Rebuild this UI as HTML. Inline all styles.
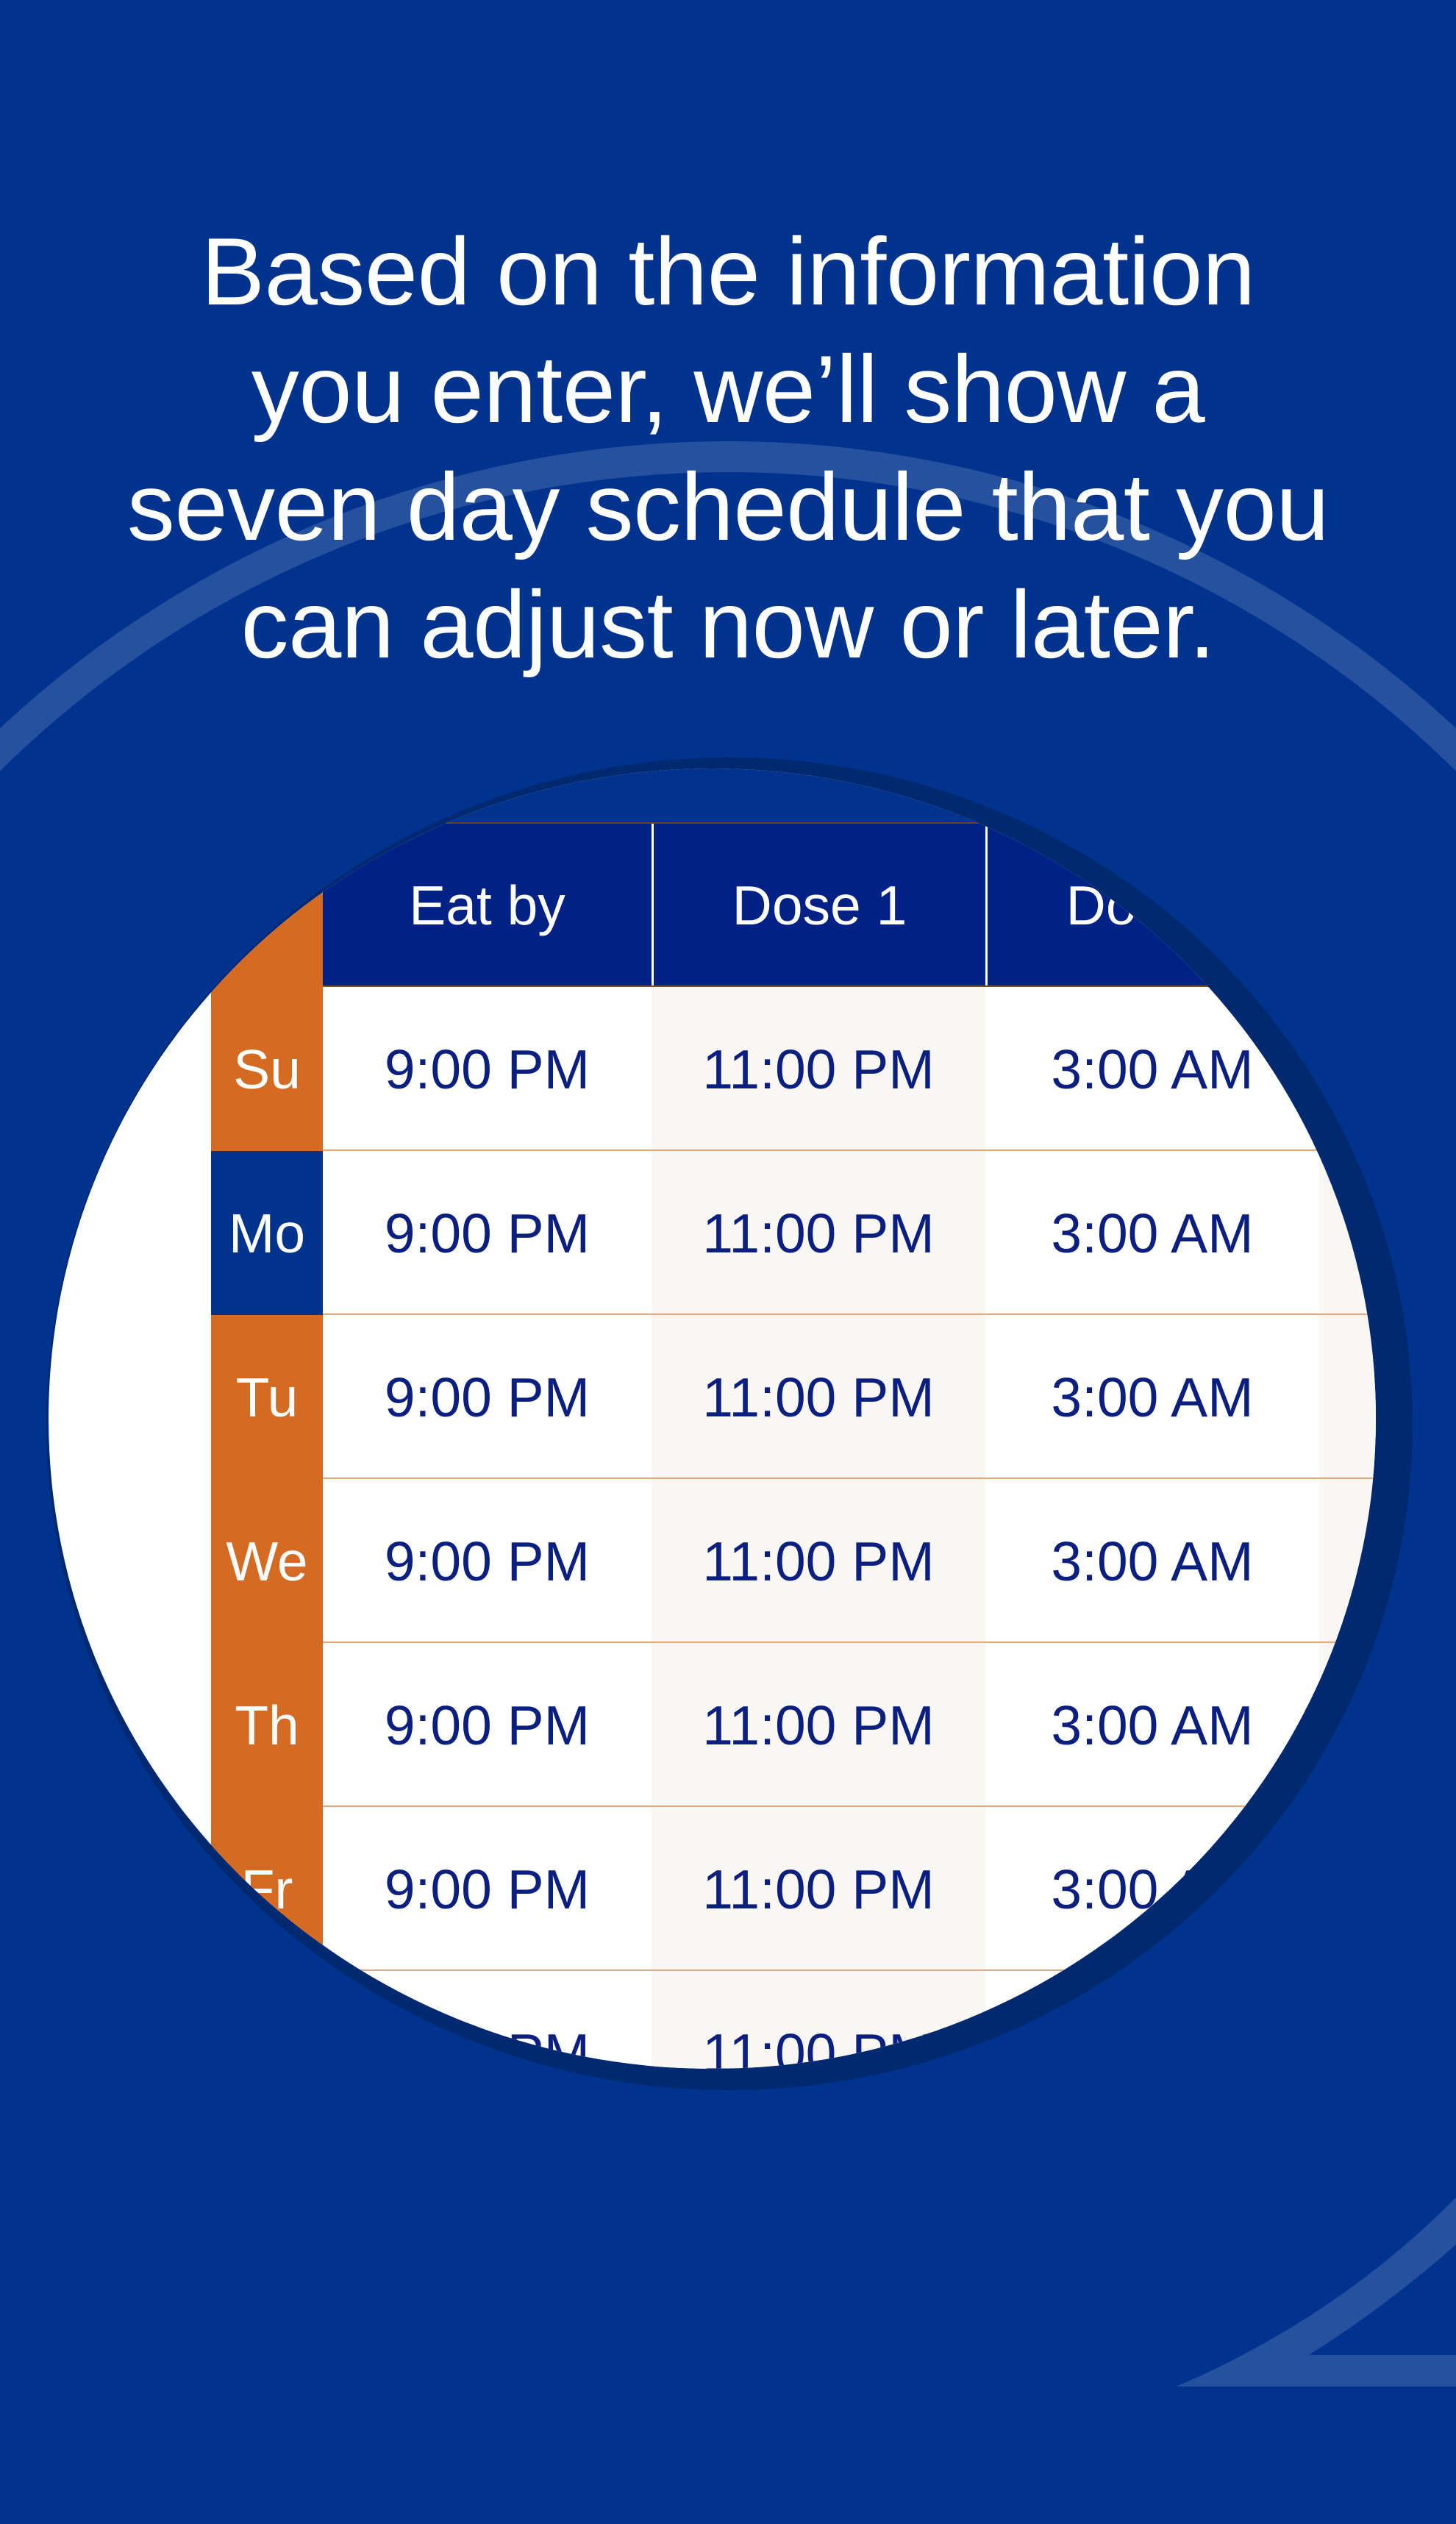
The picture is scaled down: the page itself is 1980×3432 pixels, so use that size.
<!DOCTYPE html>
<html><head><meta charset="utf-8">
<style>
html,body{margin:0;padding:0}
body{width:1980px;height:3432px;background:#00338d;position:relative;overflow:hidden;font-family:"Liberation Sans",sans-serif}
.head{position:absolute;left:0;top:289px;width:1980px;text-align:center;color:#fff;font-size:130px;line-height:160px;letter-spacing:-0.5px}
.shadow{position:absolute;left:63px;top:1030px;width:1858px;height:1812px;border-radius:50%;background:#00296f}
.clip{position:absolute;left:66px;top:1045px;width:1805px;height:1768px;border-radius:50%;overflow:hidden;background:#fff}
.a{position:absolute}
.cell{position:absolute;display:flex;align-items:center;justify-content:center;font-size:75px;color:#0a1f7f}
.hd{color:#fff;background:#002185}
.day{color:#fff;font-size:75px}
.ln{position:absolute;left:373px;width:1500px;height:2px;background:#e3a877}
</style></head><body>
<svg class="a" style="left:0;top:0" width="1980" height="3432">
<defs><clipPath id="c"><rect x="0" y="0" width="1980" height="1300"/></clipPath></defs>
<circle cx="990" cy="2051" r="1430" fill="none" stroke="#ffffff" stroke-opacity="0.15" stroke-width="42" clip-path="url(#c)"/>
<path d="M1600 3245 Q1820 3150 1980 2988 L1980 3052 Q1880 3140 1780 3202 L1980 3202 L1980 3245 Z" fill="#ffffff" fill-opacity="0.15"/>
</svg>
<div class="head">Based on the information<br>you enter, we’ll show a<br>seven day schedule that you<br>can adjust now or later.</div>
<div class="shadow"></div>
<div class="clip">
 <div class="a" style="left:0;top:0;width:1805px;height:75px;background:#00338d"></div>
 <div class="a" style="left:373px;top:73px;width:1500px;height:2px;background:#6b3f2e"></div>
 <div class="cell hd" style="left:373px;top:75px;width:447px;height:222px">Eat by</div>
 <div class="cell hd" style="left:820px;top:75px;width:454px;height:222px;border-left:3px solid #fff;box-sizing:border-box">Dose 1</div>
 <div class="cell hd" style="left:1274px;top:75px;width:454px;height:222px;border-left:3px solid #fff;box-sizing:border-box">Dose 2</div>
 <div class="cell hd" style="left:1728px;top:75px;width:200px;height:222px"></div>
 <div class="a" style="left:373px;top:295px;width:1500px;height:2px;background:#7a4a35"></div>
 <div class="a" style="left:820px;top:297px;width:454px;height:1600px;background:#f8f7f4"></div>
 <div class="a" style="left:1728px;top:297px;width:200px;height:1600px;background:#f8f7f4"></div>
 <div class="a" style="left:221px;top:75px;width:152px;height:1800px;background:#d56b22"></div>
 <div class="a" style="left:221px;top:520px;width:152px;height:223px;background:#00338d"></div>
 <div class="cell day" style="left:221px;top:297px;width:152px;height:223px">Su</div>
 <div class="cell day" style="left:221px;top:520px;width:152px;height:223px">Mo</div>
 <div class="cell day" style="left:221px;top:743px;width:152px;height:223px">Tu</div>
 <div class="cell day" style="left:221px;top:966px;width:152px;height:223px">We</div>
 <div class="cell day" style="left:221px;top:1189px;width:152px;height:223px">Th</div>
 <div class="cell day" style="left:221px;top:1412px;width:152px;height:223px">Fr</div>
 <div class="cell day" style="left:221px;top:1635px;width:152px;height:223px">Sa</div>

 <div class="ln" style="top:518px"></div>
 <div class="ln" style="top:741px"></div>
 <div class="ln" style="top:964px"></div>
 <div class="ln" style="top:1187px"></div>
 <div class="ln" style="top:1410px"></div>
 <div class="ln" style="top:1633px"></div>

 <div class="cell" style="left:373px;top:297px;width:447px;height:223px">9:00 PM</div>
 <div class="cell" style="left:820px;top:297px;width:454px;height:223px">11:00 PM</div>
 <div class="cell" style="left:1274px;top:297px;width:454px;height:223px">3:00 AM</div>
 <div class="cell" style="left:373px;top:520px;width:447px;height:223px">9:00 PM</div>
 <div class="cell" style="left:820px;top:520px;width:454px;height:223px">11:00 PM</div>
 <div class="cell" style="left:1274px;top:520px;width:454px;height:223px">3:00 AM</div>
 <div class="cell" style="left:373px;top:743px;width:447px;height:223px">9:00 PM</div>
 <div class="cell" style="left:820px;top:743px;width:454px;height:223px">11:00 PM</div>
 <div class="cell" style="left:1274px;top:743px;width:454px;height:223px">3:00 AM</div>
 <div class="cell" style="left:373px;top:966px;width:447px;height:223px">9:00 PM</div>
 <div class="cell" style="left:820px;top:966px;width:454px;height:223px">11:00 PM</div>
 <div class="cell" style="left:1274px;top:966px;width:454px;height:223px">3:00 AM</div>
 <div class="cell" style="left:373px;top:1189px;width:447px;height:223px">9:00 PM</div>
 <div class="cell" style="left:820px;top:1189px;width:454px;height:223px">11:00 PM</div>
 <div class="cell" style="left:1274px;top:1189px;width:454px;height:223px">3:00 AM</div>
 <div class="cell" style="left:373px;top:1412px;width:447px;height:223px">9:00 PM</div>
 <div class="cell" style="left:820px;top:1412px;width:454px;height:223px">11:00 PM</div>
 <div class="cell" style="left:1274px;top:1412px;width:454px;height:223px">3:00 AM</div>
 <div class="cell" style="left:373px;top:1635px;width:447px;height:223px">9:00 PM</div>
 <div class="cell" style="left:820px;top:1635px;width:454px;height:223px">11:00 PM</div>
 <div class="cell" style="left:1274px;top:1635px;width:454px;height:223px">3:00 AM</div>
</div>
</body></html>
